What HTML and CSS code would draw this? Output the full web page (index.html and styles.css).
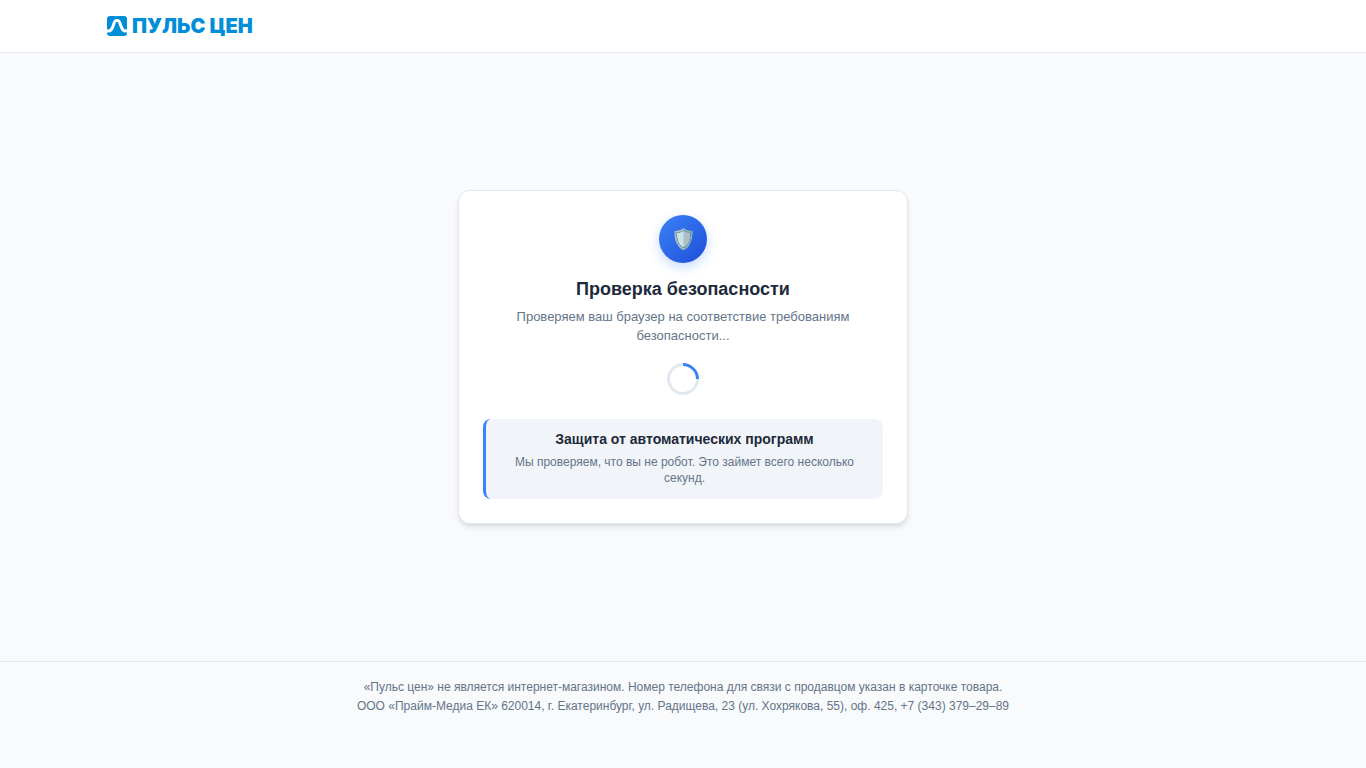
FILE: index.html
```html
<!DOCTYPE html>
<html lang="ru">
<head>
  <meta charset="UTF-8">
  <meta name="viewport" content="width=device-width, initial-scale=1.0">
  <title>Проверка безопасности</title>
  <link rel="stylesheet" href="styles.css">
</head>
<body>

  <header class="header">
    <div class="header-content">
      <a href="/" class="logo">
        <svg class="logo-icon" viewBox="0 0 20 20" aria-hidden="true">
          <rect width="20" height="20" rx="3" fill="#008ed9"/>
          <path d="M0 15H1.500C4 15 4.800 13.500 5.700 11L7.500 6Q8 4.500 9.300 4.500H10.700Q12 4.500 12.500 6L14.300 11C15.200 13.500 16 15 18.500 15H20" fill="none" stroke="#fff" stroke-width="3"/>
        </svg>
        <span class="logo-text">ПУЛЬС ЦЕН</span>
      </a>
    </div>
  </header>

  <main class="main">
    <div class="card">
      <div class="shield">🛡️</div>
      <h1 class="title">Проверка безопасности</h1>
      <p class="subtitle">Проверяем ваш браузер на соответствие требованиям безопасности...</p>
      <div class="spinner"></div>
      <div class="info">
        <h2 class="info-title">Защита от автоматических программ</h2>
        <p class="info-text">Мы проверяем, что вы не робот. Это займет всего несколько секунд.</p>
      </div>
    </div>
  </main>

  <footer class="footer">
    <p>«Пульс цен» не является интернет-магазином. Номер телефона для связи с продавцом указан в карточке товара.</p>
    <p>ООО «Прайм-Медиа ЕК» 620014, г. Екатеринбург, ул. Радищева, 23 (ул. Хохрякова, 55), оф. 425, +7 (343) 379–29–89</p>
  </footer>

</body>
</html>
```

FILE: styles.css
```css
* {
  margin: 0;
  padding: 0;
  box-sizing: border-box;
}

body {
  font-family: "Liberation Sans", Arial, sans-serif;
  background: #f8fafc;
  color: #1e293b;
  min-height: 100vh;
  display: flex;
  flex-direction: column;
}

.header {
  background: #fff;
  border-bottom: 1px solid #e2e8f0;
  padding: 16px 0;
}

.header-content {
  max-width: 1200px;
  margin: 0 auto;
  padding: 0 24px;
  display: flex;
}

.logo {
  display: flex;
  align-items: center;
  gap: 5px;
  color: #008ed9;
  text-decoration: none;
}

.logo-icon {
  width: 20px;
  height: 20px;
}

.logo-text {
  font-family: Inter, sans-serif;
  font-size: 20px;
  font-weight: 900;
  line-height: 20px;
}

.main {
  flex: 1;
  display: flex;
  align-items: center;
  justify-content: center;
  padding: 24px;
}

.card {
  width: 100%;
  max-width: 450px;
  background: #fff;
  border: 1px solid #e2e8f0;
  border-radius: 12px;
  padding: 24px;
  text-align: center;
  box-shadow: 0 4px 6px -1px rgba(0, 0, 0, 0.1), 0 2px 4px -1px rgba(0, 0, 0, 0.06);
}

.shield {
  width: 48px;
  height: 48px;
  margin: 0 auto 12px;
  border-radius: 50%;
  background: linear-gradient(135deg, #3b82f6, #1d4ed8);
  box-shadow: 0 4px 12px rgba(59, 130, 246, 0.3);
  display: flex;
  align-items: center;
  justify-content: center;
  font-size: 20px;
  color: #fff;
}

.title {
  font-size: 18px;
  line-height: 28px;
  margin-bottom: 4px;
}

.subtitle {
  font-size: 13px;
  line-height: 19px;
  color: #64748b;
}

.spinner {
  width: 32px;
  height: 32px;
  margin: 18px auto 24px;
  border: 3px solid #e2e8f0;
  border-top-color: #3b82f6;
  border-radius: 50%;
  transform: rotate(45deg);
}

.info {
  background: #f1f5f9;
  border-left: 3px solid #3b82f6;
  border-radius: 8px;
  padding: 12px 16px 13px;
}

.info-title {
  font-size: 14px;
  line-height: 17px;
  margin-bottom: 6px;
}

.info-text {
  font-size: 12px;
  line-height: 16px;
  color: #64748b;
}

.footer {
  border-top: 1px solid #e2e8f0;
  padding: 16px 24px 52px;
  text-align: center;
  font-size: 12px;
  line-height: 19px;
  color: #64748b;
}
```
